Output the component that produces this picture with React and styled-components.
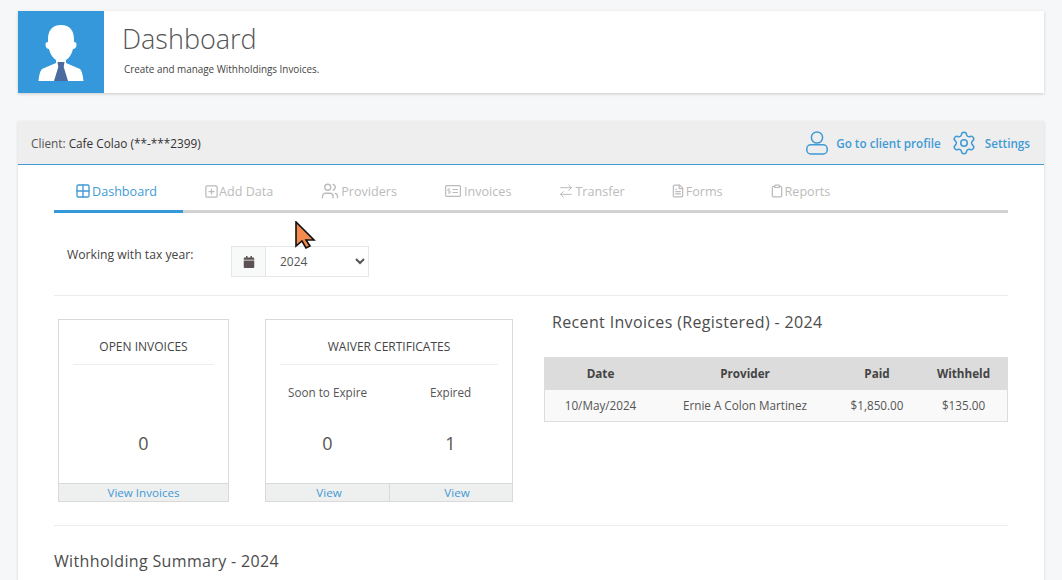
import React from 'react';
import styled, { createGlobalStyle } from 'styled-components';
import { Settings, Grid2x2, SquarePlus, Users, ArrowRightLeft, FileText, Clipboard } from 'lucide-react';
import { FaCalendar } from 'react-icons/fa';

const GlobalStyle = createGlobalStyle`
    html, body {
        margin: 0;
        padding: 0;
        height: 580px;
        overflow: hidden;
        background-color: #f6f7f9;
        font-family: "Open Sans", "Liberation Sans", sans-serif;
        color: #444;
    }
`;

const InvoiceIcon = () => (
    <svg width="16" height="12" viewBox="0 0 16 12" fill="none" stroke="currentColor">
        <rect x="0.6" y="0.6" width="14.8" height="10.8" rx="1" strokeWidth="1.2" />
        <path d="M5 4H3v2h2v2H3M7.5 4.5H13M7.5 7.5H13" strokeWidth="1" />
    </svg>
);

const ProfileIcon = () => (
    <svg width="22" height="24" viewBox="0 0 22 24" fill="none" stroke="currentColor" strokeWidth="1.5">
        <circle cx="11" cy="6.500" r="5.600" />
        <rect x="0.800" y="13.800" width="20.400" height="9.200" rx="4" />
    </svg>
);

const AvatarIcon = () => (
    <svg width="46" height="58" viewBox="0 0 46 58">
        <path fill="#fff" d="M23 1c-9 0-13 6-13 14v3c-2 0-2.500 1-2.500 3s1.500 4 3.500 4c1 5 4 9 7 11v3L4 45C2 47 1 52 .5 57h45c-.5-5-1.500-10-3.500-12l-14-6v-3c3-2 6-6 7-11 2 0 3.500-2 3.500-4s-.5-3-2.500-3v-3C36 7 32 1 23 1z" />
        <path fill="#4a6aa0" d="M19.500 38h7l-.8 5 4.300 14H16l4.300-14z" />
    </svg>
);

const tabs = [
    { label: 'Dashboard', width: '14px', icon: <Grid2x2 size={16} strokeWidth={2} />, active: true },
    { label: 'Add Data', width: '12px', icon: <SquarePlus size={15} strokeWidth={2} /> },
    { label: 'Providers', width: '18px', icon: <Users size={18} strokeWidth={1.8} /> },
    { label: 'Invoices', width: '17px', icon: <InvoiceIcon /> },
    { label: 'Transfer', width: '14px', icon: <ArrowRightLeft size={16} strokeWidth={1.5} /> },
    { label: 'Forms', width: '11px', icon: <FileText size={14} strokeWidth={2.1} /> },
    { label: 'Reports', width: '12px', icon: <Clipboard size={14} strokeWidth={2.1} /> },
];

const App = () => {
    return (
        <Page>
            <GlobalStyle />
            <HeaderCard>
                <AvatarBox><AvatarIcon /></AvatarBox>
                <HeaderText>
                    <Title>Dashboard</Title>
                    <Subtitle>Create and manage Withholdings Invoices.</Subtitle>
                </HeaderText>
            </HeaderCard>

            <Panel>
                <PanelHead>
                    <ClientLabel>Client: <strong>Cafe Colao (**-***2399)</strong></ClientLabel>
                    <HeadLinks>
                        <HeadLink><ProfileIcon />Go to client profile</HeadLink>
                        <HeadLink><Settings size={26} strokeWidth={1.4} />Settings</HeadLink>
                    </HeadLinks>
                </PanelHead>

                <PanelBody>
                    <TabBar>
                        {tabs.map((tab) => (
                            <Tab key={tab.label} $active={tab.active}>
                                <TabIcon $width={tab.width}>{tab.icon}</TabIcon>
                                {tab.label}
                            </Tab>
                        ))}
                    </TabBar>

                    <YearRow>
                        <YearLabel>Working with tax year:</YearLabel>
                        <YearGroup>
                            <Addon><FaCalendar size={12} /></Addon>
                            <YearSelect defaultValue="2024">
                                <option>2024</option>
                                <option>2023</option>
                            </YearSelect>
                        </YearGroup>
                    </YearRow>

                    <Columns>
                        <Cards>
                            <Card $width="171px">
                                <CardTitle>OPEN INVOICES</CardTitle>
                                <CardBody>
                                    <Stat><StatLabel /><StatValue>0</StatValue></Stat>
                                </CardBody>
                                <CardFoot><FootLink>View Invoices</FootLink></CardFoot>
                            </Card>
                            <Card $width="248px">
                                <CardTitle>WAIVER CERTIFICATES</CardTitle>
                                <CardBody>
                                    <Stat><StatLabel>Soon to Expire</StatLabel><StatValue>0</StatValue></Stat>
                                    <Stat><StatLabel>Expired</StatLabel><StatValue>1</StatValue></Stat>
                                </CardBody>
                                <CardFoot>
                                    <FootLink $indent="3px">View</FootLink>
                                    <FootLink $indent="12px">View</FootLink>
                                </CardFoot>
                            </Card>
                        </Cards>
                        <Recent>
                            <RecentTitle>Recent Invoices (Registered) - 2024</RecentTitle>
                            <Table>
                                <colgroup>
                                    <col width="111" />
                                    <col width="178" />
                                    <col width="86" />
                                    <col width="87" />
                                </colgroup>
                                <thead>
                                    <tr><th>Date</th><th>Provider</th><th>Paid</th><th>Withheld</th></tr>
                                </thead>
                                <tbody>
                                    <tr><td>10/May/2024</td><td>Ernie A Colon Martinez</td><td>$1,850.00</td><td>$135.00</td></tr>
                                </tbody>
                            </Table>
                        </Recent>
                    </Columns>

                    <SummaryTitle>Withholding Summary - 2024</SummaryTitle>
                </PanelBody>
            </Panel>

            <Pointer width="21" height="28" viewBox="0 0 21 28">
                <path d="M1 1v24l6-5 4 7 4-2-4-6h8z" fill="#f58c4f" stroke="#111" strokeWidth="1.6" strokeLinejoin="miter" />
            </Pointer>
        </Page>
    );
};

const Page = styled.div`
    position: relative;
    height: 580px;
    overflow: hidden;
    padding: 11px 18px 0;
    box-sizing: border-box;
`;

const HeaderCard = styled.div`
    display: flex;
    height: 82px;
    background-color: #fff;
    box-shadow: 0 1px 3px rgba(0, 0, 0, 0.18);
`;

const AvatarBox = styled.div`
    width: 86px;
    display: flex;
    align-items: center;
    justify-content: center;
    background-color: #3498db;
    padding-top: 2px;
    box-sizing: border-box;
`;

const HeaderText = styled.div`
    padding: 10px 0 0 18px;
`;

const Title = styled.h1`
    margin: 0;
    font-size: 27px;
    line-height: 36px;
    font-weight: 300;
    color: #555;
`;

const Subtitle = styled.p`
    margin: 6px 0 0 2px;
    font-size: 9.9px;
    line-height: 13px;
    color: #444;
`;

const Panel = styled.div`
    margin-top: 28px;
    min-height: 520px;
    background-color: #fff;
    box-shadow: 0 1px 3px rgba(0, 0, 0, 0.14);
`;

const PanelHead = styled.div`
    height: 44px;
    display: flex;
    align-items: center;
    justify-content: space-between;
    padding: 0 14px 0 13px;
    background-color: #eee;
    border-bottom: 1px solid #3f9ad6;
    box-sizing: border-box;
`;

const ClientLabel = styled.span`
    font-size: 11.8px;
    color: #555;

    strong {
        font-weight: 400;
        color: #333;
    }
`;

const HeadLinks = styled.div`
    display: flex;
    align-items: center;
    gap: 10px;
`;

const HeadLink = styled.a`
    display: flex;
    align-items: center;
    gap: 8px;
    font-size: 11.7px;
    font-weight: 600;
    color: #3f9ad6;
`;

const PanelBody = styled.div`
    padding: 0 36px;
`;

const TabBar = styled.div`
    display: flex;
    height: 45px;
    border-bottom: 3px solid #d2d2d2;
    box-sizing: content-box;
`;

const Tab = styled.div`
    display: flex;
    align-items: center;
    gap: 2px;
    height: 48px;
    padding: 7px 26px 0 22px;
    box-sizing: border-box;
    font-size: 12.6px;
    color: ${(props) => (props.$active ? '#3f9ad6' : '#bbb')};
    border-bottom: 3px solid ${(props) => (props.$active ? '#3498db' : 'transparent')};
`;

const TabIcon = styled.span`
    display: flex;
    justify-content: center;
    width: ${(props) => props.$width};

    svg {
        flex: none;
    }
`;

const YearRow = styled.div`
    display: flex;
    align-items: flex-start;
    height: 83px;
    padding: 33px 0 0 13px;
    box-sizing: border-box;
    border-bottom: 1px solid #ececec;
`;

const YearLabel = styled.label`
    width: 164px;
    font-size: 12.2px;
    line-height: 18px;
    color: #444;
`;

const YearGroup = styled.div`
    display: flex;
    width: 138px;
    height: 31px;
    border: 1px solid #e6e6e6;
    box-sizing: border-box;
`;

const Addon = styled.span`
    width: 34px;
    display: flex;
    align-items: center;
    justify-content: center;
    background-color: #f8f9f9;
    border-right: 1px solid #e6e6e6;
    color: #5b5353;
    box-sizing: border-box;
`;

const YearSelect = styled.select`
    flex: 1;
    min-width: 0;
    border: 0;
    outline: 0;
    padding: 0 0 0 10px;
    background-color: #fff;
    font-family: inherit;
    font-size: 12px;
    color: #555;
`;

const Columns = styled.div`
    display: flex;
    height: 230px;
    padding-top: 23px;
    box-sizing: border-box;
    border-bottom: 1px solid #ececec;
`;

const Cards = styled.div`
    display: flex;
    gap: 36px;
    padding-left: 4px;
    width: 490px;
    box-sizing: border-box;
`;

const Card = styled.div`
    width: ${(props) => props.$width};
    height: 183px;
    display: flex;
    flex-direction: column;
    border: 1px solid #d9d9d9;
    box-sizing: border-box;
`;

const CardTitle = styled.div`
    margin: 0 14px;
    height: 45px;
    padding-top: 19px;
    box-sizing: border-box;
    border-bottom: 1px solid #eee;
    text-align: center;
    font-size: 12px;
    line-height: 16px;
    color: #444;
`;

const CardBody = styled.div`
    flex: 1;
    display: flex;
`;

const Stat = styled.div`
    flex: 1;
    display: flex;
    flex-direction: column;
    align-items: center;
`;

const StatLabel = styled.div`
    height: 68px;
    padding-top: 19px;
    box-sizing: border-box;
    font-size: 11.7px;
    line-height: 16px;
    color: #555;
`;

const StatValue = styled.div`
    font-size: 18px;
    line-height: 20px;
    color: #555;
`;

const CardFoot = styled.div`
    display: flex;
    height: 17px;
    background-color: #eeefef;
    border-top: 1px solid #d9d9d9;
    box-sizing: content-box;
`;

const FootLink = styled.a`
    flex: 1 1 50%;
    box-sizing: border-box;
    padding-left: ${(props) => props.$indent || 0};
    text-align: center;
    font-size: 11.6px;
    line-height: 18px;
    color: #3f9ad6;

    & + & {
        border-left: 1px solid #d9d9d9;
    }
`;

const Recent = styled.div`
    width: 464px;
`;

const RecentTitle = styled.h3`
    margin: -7px 0 0 8px;
    height: 45px;
    font-size: 16px;
    line-height: 20px;
    font-weight: 500;
    letter-spacing: 0.35px;
    color: #4c4c4c;
`;

const Table = styled.table`
    width: 464px;
    table-layout: fixed;
    border-collapse: separate;
    border-spacing: 0;
    border: 1px solid #ddd;
    font-size: 11.7px;
    text-align: center;

    th {
        height: 30px;
        padding: 0 0 2px;
        background-color: #dcdcdc;
        font-weight: 700;
        color: #444;
    }

    td {
        height: 30px;
        padding: 0 0 1px;
        background-color: #f9f9f9;
        color: #555;
    }
`;

const SummaryTitle = styled.h3`
    margin: 25px 0 0;
    font-size: 16px;
    line-height: 20px;
    font-weight: 500;
    letter-spacing: 0.35px;
    color: #4c4c4c;
`;

const Pointer = styled.svg`
    position: absolute;
    left: 295px;
    top: 221px;
`;

export default App;
